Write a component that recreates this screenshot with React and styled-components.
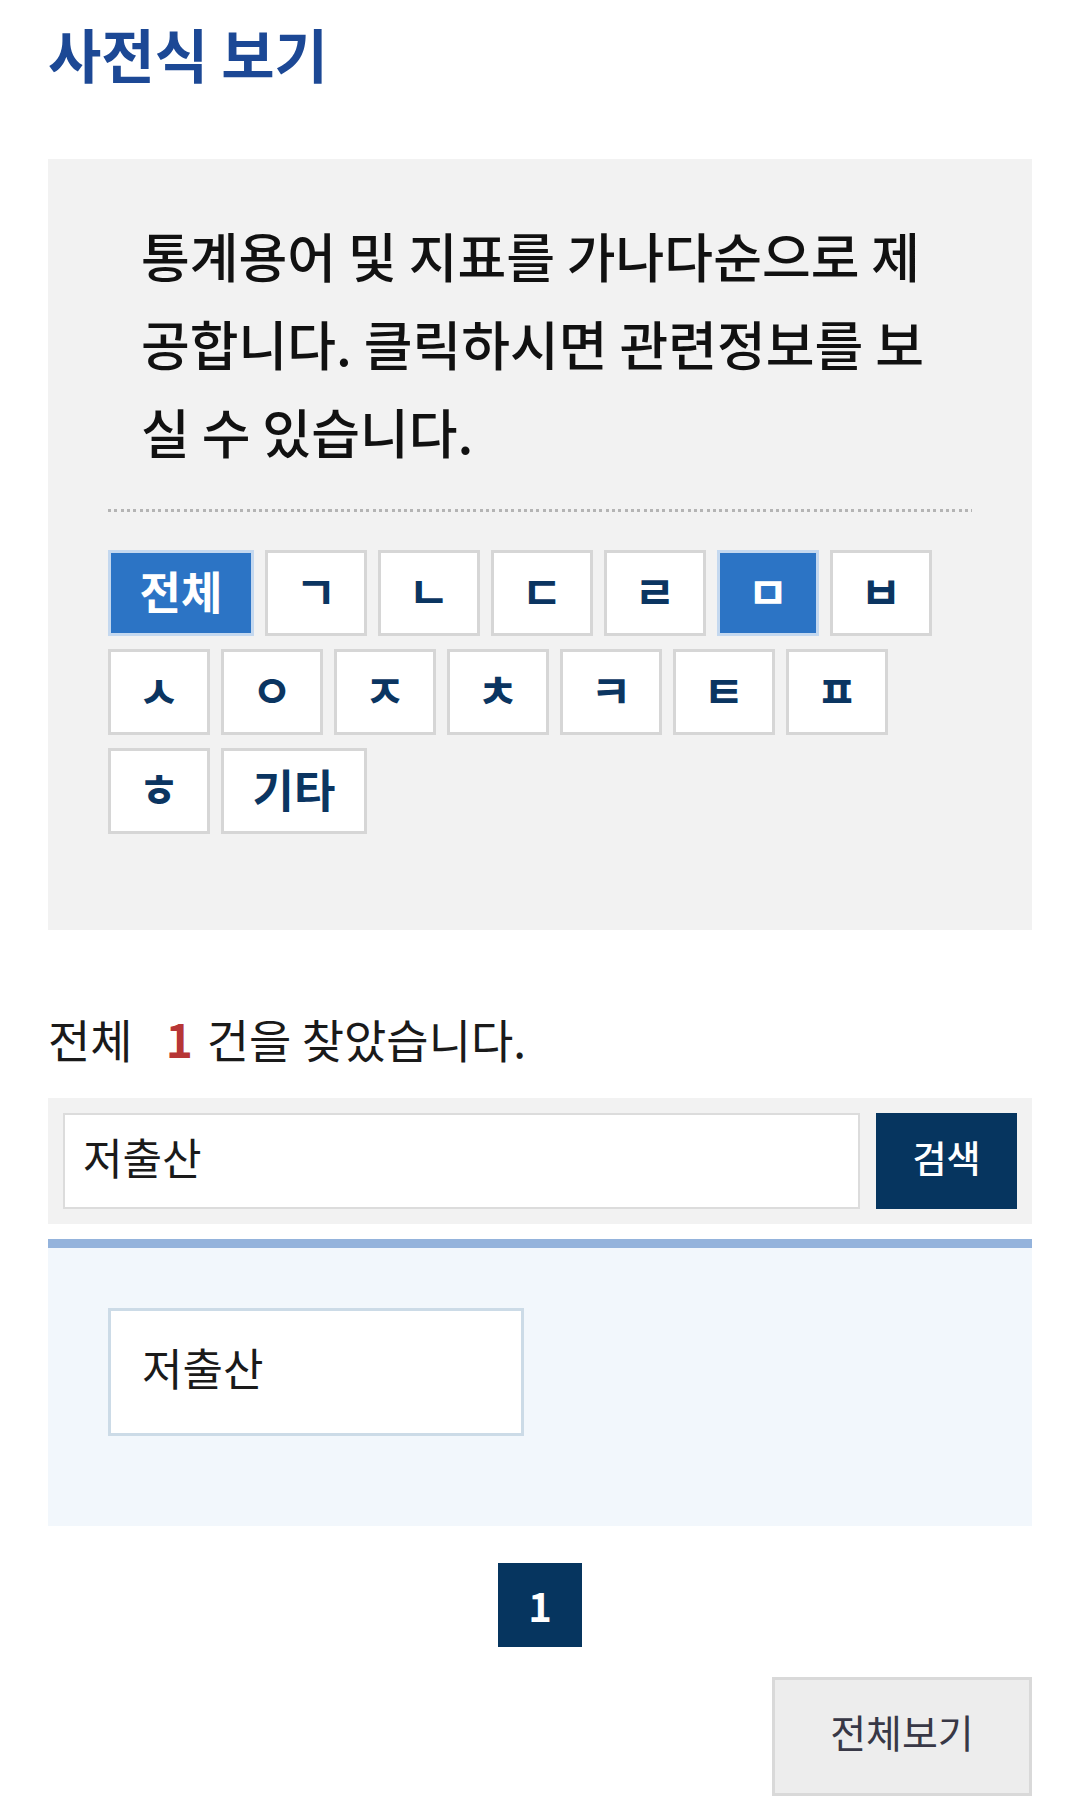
import React from "react";
import styled, { createGlobalStyle } from "styled-components";

const GlobalStyle = createGlobalStyle`
  html, body {
    margin: 0;
    padding: 0;
    background: #ffffff;
  }
  body {
    font-family: "Noto Sans CJK KR", "Noto Sans", sans-serif;
    color: #222;
  }
  * { box-sizing: border-box; }
`;

const Page = styled.div`
  width: 1080px;
  padding: 0 48px 0;
`;

const Title = styled.h2`
  margin: 0;
  padding-top: 14px;
  font-size: 58px;
  line-height: 78px;
  font-weight: 700;
  color: #1c4895;
`;

const Panel = styled.section`
  margin-top: 67px;
  background: #f2f2f2;
  padding: 52px 60px 96px;
`;

const Desc = styled.p`
  margin: 0;
  padding: 0 25px 0 33px;
  font-size: 53px;
  line-height: 88px;
  font-weight: 500;
  color: #111;
  word-break: break-all;
`;

const Dots = styled.div`
  margin-top: 34px;
  height: 3px;
  background-image: repeating-linear-gradient(
    to right,
    #b4b4b4 0 3px,
    transparent 3px 6.3px
  );
`;

const Keys = styled.div`
  margin-top: 38px;
  display: flex;
  flex-wrap: wrap;
  gap: 13px 11px;
`;

const Key = styled.button`
  width: ${(p) => (p.$wide ? "146px" : "102px")};
  height: 86px;
  padding: 0 0 6px;
  border: 3px solid ${(p) => (p.$active ? "#c4d8ef" : "#d6d6d6")};
  background: ${(p) => (p.$active ? "#2c74c5" : "#ffffff")};
  color: ${(p) => (p.$active ? "#ffffff" : "#0b3561")};
  font-family: inherit;
  font-size: 45px;
  font-weight: 700;
  line-height: 1;
  display: flex;
  align-items: center;
  justify-content: center;
`;

const Count = styled.p`
  margin: 60px 0 0;
  font-size: 46px;
  line-height: 96px;
  color: #1a1a1a;
`;

const Num = styled.strong`
  color: #b73636;
  font-weight: 700;
  margin: 0 14px 0 33px;
`;

const SearchBar = styled.form`
  margin-top: 12px;
  background: #f2f2f2;
  padding: 15px;
  display: flex;
  gap: 16px;
`;

const Input = styled.input`
  flex: 1;
  min-width: 0;
  height: 96px;
  border: 2px solid #dcdcdc;
  background: #fff;
  padding: 0 18px 10px;
  font-family: inherit;
  font-size: 43px;
  color: #1a1a1a;
  outline: none;
`;

const SearchButton = styled.button`
  width: 141px;
  height: 96px;
  border: none;
  padding: 0 0 8px;
  background: #06355f;
  color: #fff;
  font-family: inherit;
  font-size: 37px;
  font-weight: 500;
`;

const Results = styled.div`
  margin-top: 15px;
  border-top: 9px solid #94b3dc;
  background: #f2f7fc;
  padding: 60px 60px 90px;
`;

const ResultItem = styled.a`
  display: flex;
  align-items: center;
  width: 416px;
  height: 128px;
  padding: 0 0 10px 31px;
  background: #fff;
  border: 3px solid #ccdbe7;
  font-size: 44px;
  color: #1a1a1a;
  text-decoration: none;
`;

const Pager = styled.nav`
  margin-top: 37px;
  display: flex;
  justify-content: center;
`;

const PageNo = styled.span`
  width: 84px;
  height: 84px;
  background: #06355f;
  color: #fff;
  font-size: 40px;
  font-weight: 700;
  display: flex;
  align-items: center;
  justify-content: center;
`;

const Footer = styled.div`
  margin-top: 30px;
  display: flex;
  justify-content: flex-end;
`;

const AllButton = styled.button`
  width: 260px;
  height: 119px;
  border: 3px solid #d9d9d9;
  background: #ededed;
  padding: 0 0 12px;
  color: #383846;
  font-family: inherit;
  font-size: 39px;
`;

const keys = [
  { label: "전체", wide: true, active: true },
  { label: "ㄱ" },
  { label: "ㄴ" },
  { label: "ㄷ" },
  { label: "ㄹ" },
  { label: "ㅁ", active: true },
  { label: "ㅂ" },
  { label: "ㅅ" },
  { label: "ㅇ" },
  { label: "ㅈ" },
  { label: "ㅊ" },
  { label: "ㅋ" },
  { label: "ㅌ" },
  { label: "ㅍ" },
  { label: "ㅎ" },
  { label: "기타", wide: true },
];

export default function App() {
  return (
    <>
      <GlobalStyle />
      <Page>
        <Title>사전식 보기</Title>
        <Panel>
          <Desc>
            통계용어 및 지표를 가나다순으로 제공합니다. 클릭하시면 관련정보를 보실 수 있습니다.
          </Desc>
          <Dots />
          <Keys>
            {keys.map((k) => (
              <Key key={k.label} type="button" $wide={k.wide} $active={k.active}>
                {k.label}
              </Key>
            ))}
          </Keys>
        </Panel>
        <Count>
          전체<Num>1</Num>건을 찾았습니다.
        </Count>
        <SearchBar onSubmit={(e) => e.preventDefault()}>
          <Input defaultValue="저출산" />
          <SearchButton type="submit">검색</SearchButton>
        </SearchBar>
        <Results>
          <ResultItem href="#">저출산</ResultItem>
        </Results>
        <Pager>
          <PageNo>1</PageNo>
        </Pager>
        <Footer>
          <AllButton type="button">전체보기</AllButton>
        </Footer>
      </Page>
    </>
  );
}
